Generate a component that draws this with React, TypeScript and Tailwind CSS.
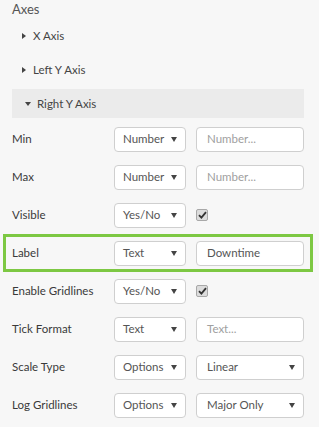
type RowKind = 'input' | 'check' | 'options'

type AxisRow = {
  label: string
  type: string
  kind: RowKind
  value?: string
  placeholder?: string
  highlight?: boolean
}

const rows: AxisRow[] = [
  { label: 'Min', type: 'Number', kind: 'input', placeholder: 'Number...' },
  { label: 'Max', type: 'Number', kind: 'input', placeholder: 'Number...' },
  { label: 'Visible', type: 'Yes/No', kind: 'check' },
  { label: 'Label', type: 'Text', kind: 'input', value: 'Downtime', highlight: true },
  { label: 'Enable Gridlines', type: 'Yes/No', kind: 'check' },
  { label: 'Tick Format', type: 'Text', kind: 'input', placeholder: 'Text...' },
  { label: 'Scale Type', type: 'Options', kind: 'options', value: 'Linear' },
  { label: 'Log Gridlines', type: 'Options', kind: 'options', value: 'Major Only' }
]

const Caret = () => (
  <svg width="6" height="6" viewBox="0 0 6 6" className="shrink-0">
    <path d="M0 1 L6 1 L3 6 Z" fill="#444" />
  </svg>
)

const SelectBox = ({ text, width }: { text: string; width: string }) => (
  <div
    className={`${width} h-[25px] flex items-center justify-between pl-[8px] pr-[8px] bg-white border border-[#cfcfcf] rounded-[4px] text-[11.5px] text-[#555]`}
  >
    <span>{text}</span>
    <Caret />
  </div>
)

const Checkbox = () => (
  <div className="w-[12px] h-[12px] ml-[10px] flex items-center justify-center bg-[#dcdcdc] border border-[#a8a8a8] rounded-[2px]">
    <svg width="9" height="8" viewBox="0 0 9 8">
      <path d="M1 4.2 L3.4 6.6 L8 1.2" stroke="#333" strokeWidth="1.8" fill="none" />
    </svg>
  </div>
)

const Row = ({ row }: { row: AxisRow }) => (
  <div
    className={
      row.highlight
        ? 'h-[38px] flex items-center ml-[3px] mr-[6px] pl-[6px] border-[3px] border-[#7dc843]'
        : 'h-[38px] flex items-center pl-3'
    }
  >
    <div className="w-[102px] text-[11.5px] text-[#3a3a3a]">{row.label}</div>

    <SelectBox text={row.type} width="w-[72px]" />

    {row.kind === 'input' && (
      <div className="w-[108px] h-[25px] ml-[10px] flex items-center pl-[10px] bg-white border border-[#cfcfcf] rounded-[4px] text-[11.5px]">
        {row.value ? (
          <span className="text-[#555]">{row.value}</span>
        ) : (
          <span className="text-[#a0a0a0]">{row.placeholder}</span>
        )}
      </div>
    )}

    {row.kind === 'options' && (
      <div className="ml-[10px]">
        <SelectBox text={row.value ?? ''} width="w-[108px] !pl-[10px]" />
      </div>
    )}

    {row.kind === 'check' && <Checkbox />}
  </div>
)

const App = () => {
  return (
    <div className="w-[319px] h-[427px] overflow-hidden bg-[#f7f7f7] font-['Lato','Noto_Sans',sans-serif]">
      <div className="pl-3 pt-[1px] h-[19px] text-[13px] leading-[17px] text-[#555]">
        Axes
      </div>

      <div className="h-[34px] flex items-center pl-[22px] text-[11.5px] text-[#444]">
        <svg width="4" height="6" viewBox="0 0 4 6" className="mr-[7px]">
          <path d="M0 0 L4 3 L0 6 Z" fill="#444" />
        </svg>
        X Axis
      </div>

      <div className="h-[34px] flex items-center pl-[22px] text-[11.5px] text-[#444]">
        <svg width="4" height="6" viewBox="0 0 4 6" className="mr-[7px]">
          <path d="M0 0 L4 3 L0 6 Z" fill="#444" />
        </svg>
        Left Y Axis
      </div>

      <div className="mt-[2px] mx-3 w-[292px] h-[29px] flex items-center pl-[13px] bg-[#ebebeb] text-[11.5px] text-[#444]">
        <svg width="6" height="4" viewBox="0 0 6 4" className="mr-[6px]">
          <path d="M0 0 L6 0 L3 4 Z" fill="#444" />
        </svg>
        Right Y Axis
      </div>

      <div className="mt-[2px] flex flex-col">
        {rows.map(row => (
          <Row key={row.label} row={row} />
        ))}
      </div>
    </div>
  )
}

export default App
